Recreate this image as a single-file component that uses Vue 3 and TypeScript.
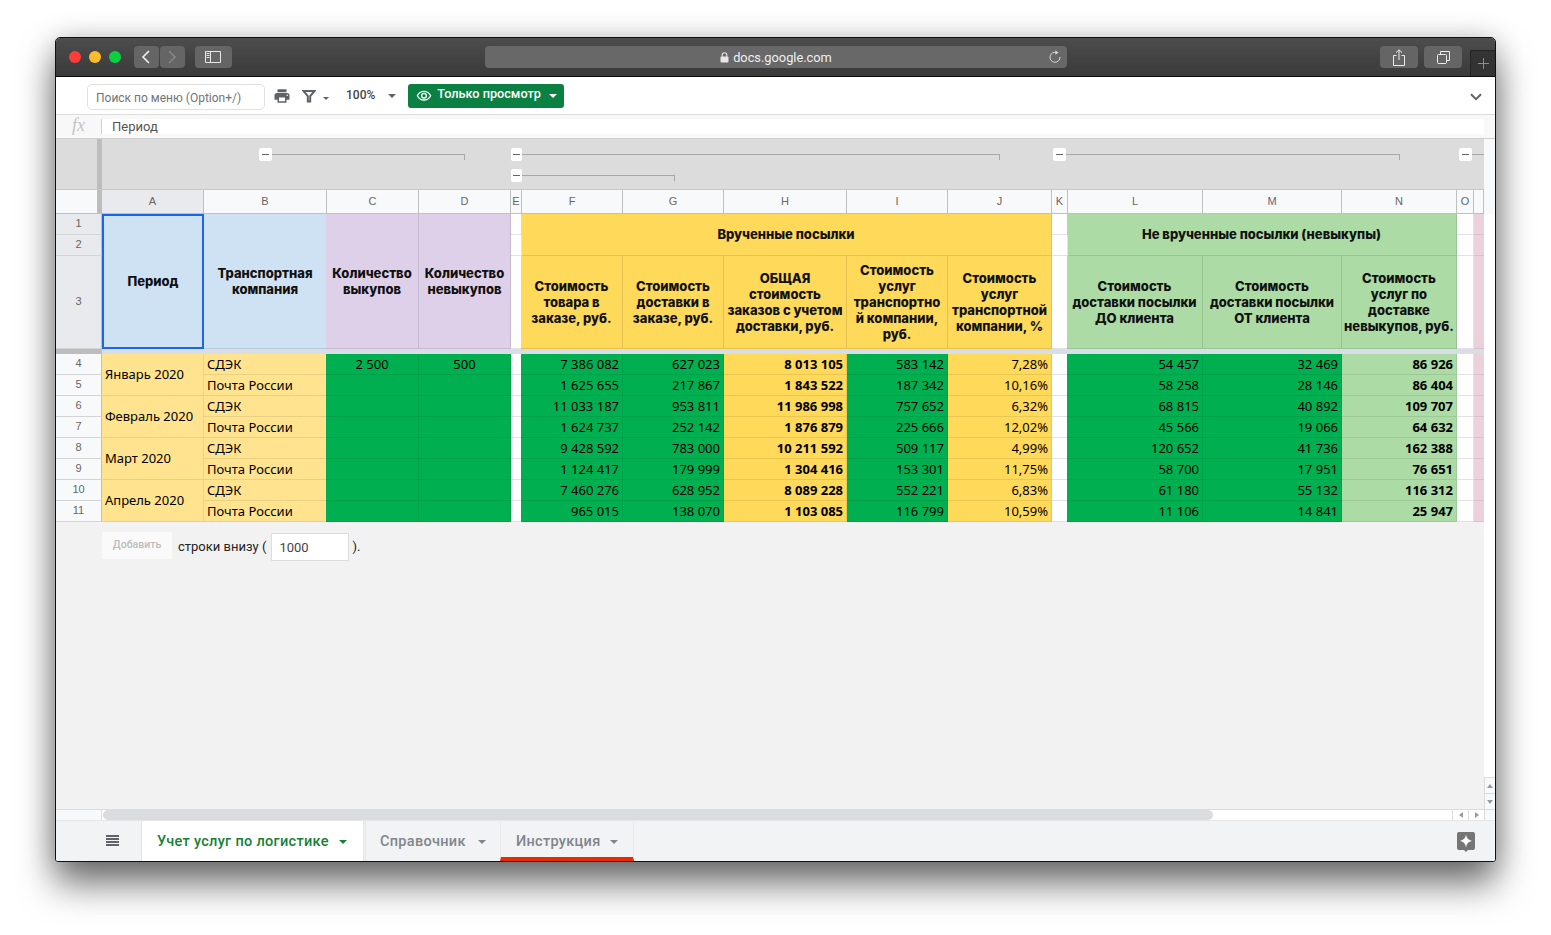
<script setup lang="ts">
interface Row { n: number; period?: string; co: string; c?: string; d?: string; v: string[] }
const cdek = 'СДЭК'
const post = 'Почта России'
const rows: Row[] = [
  { n: 4, period: 'Январь 2020', co: cdek, c: '2 500', d: '500', v: ['7 386 082','627 023','8 013 105','583 142','7,28%','54 457','32 469','86 926'] },
  { n: 5, co: post, v: ['1 625 655','217 867','1 843 522','187 342','10,16%','58 258','28 146','86 404'] },
  { n: 6, period: 'Февраль 2020', co: cdek, v: ['11 033 187','953 811','11 986 998','757 652','6,32%','68 815','40 892','109 707'] },
  { n: 7, co: post, v: ['1 624 737','252 142','1 876 879','225 666','12,02%','45 566','19 066','64 632'] },
  { n: 8, period: 'Март 2020', co: cdek, v: ['9 428 592','783 000','10 211 592','509 117','4,99%','120 652','41 736','162 388'] },
  { n: 9, co: post, v: ['1 124 417','179 999','1 304 416','153 301','11,75%','58 700','17 951','76 651'] },
  { n: 10, period: 'Апрель 2020', co: cdek, v: ['7 460 276','628 952','8 089 228','552 221','6,83%','61 180','55 132','116 312'] },
  { n: 11, co: post, v: ['965 015','138 070','1 103 085','116 799','10,59%','11 106','14 841','25 947'] },
]
const columns = ['A','B','C','D','E','F','G','H','I','J','K','L','M','N','O','']
const groupRows = [
  [{ m: 203, w: 206, tick: true, tight: false }, { m: 46, w: 489, tick: true, tight: true }, { m: 53, w: 347, tick: true, tight: false }, { m: 59, w: 25, tick: false, tight: false }],
  [{ m: 455, w: 164, tick: true, tight: true }],
]
const valueClass = ['green','green','yellow b','green','yellow','green','green','lgreen b']
const deliveredHeads = ['Стоимость\nтовара в\nзаказе, руб.','Стоимость\nдоставки в\nзаказе, руб.','ОБЩАЯ\nстоимость\nзаказов с учетом\nдоставки, руб.','Стоимость\nуслуг\nтранспортно\nй компании,\nруб.','Стоимость\nуслуг\nтранспортной\nкомпании, %']
const returnedHeads = ['Стоимость\nдоставки посылки\nДО клиента','Стоимость\nдоставки посылки\nОТ клиента','Стоимость\nуслуг по\nдоставке\nневыкупов, руб.']
</script>

<template>
  <div class="page">
    <div class="window">
      <header class="titlebar">
        <div class="lights"><i class="red"></i><i class="amber"></i><i class="lime"></i></div>
        <div class="navpair">
          <button class="tbtn nav"><svg width="12" height="16" viewBox="0 0 12 16"><path d="M9 2 3 8l6 6" fill="none" stroke="#f2f2f2" stroke-width="1.6"/></svg></button>
          <button class="tbtn nav"><svg width="12" height="16" viewBox="0 0 12 16"><path d="m3 2 6 6-6 6" fill="none" stroke="#8a8a8a" stroke-width="1.4"/></svg></button>
        </div>
        <button class="tbtn side"><svg width="16" height="12" viewBox="0 0 16 12"><path d="M.5.5h15v11H.5zM5.5.5v11" fill="none" stroke="#e8e8e8"/><path d="M1.5 2.5h3M1.5 4.5h3M1.5 6.5h3" stroke="#e8e8e8"/></svg></button>
        <div class="url">
          <svg width="9" height="11" viewBox="0 0 9 11"><rect x="0.5" y="4.5" width="8" height="6" rx="1" fill="#e6e6e6"/><path d="M2.2 5V3a2.3 2.3 0 0 1 4.6 0v2" fill="none" stroke="#e6e6e6" stroke-width="1.1"/></svg>
          <span>docs.google.com</span>
          <svg class="reload" width="14" height="14" viewBox="0 0 14 14"><path d="M8.8 2.6A5 5 0 1 0 12 7" fill="none" stroke="#d8d8d8" stroke-width="1"/><path d="M7.3.4v4.4l3.4-2.2z" fill="#d8d8d8"/></svg>
        </div>
        <button class="tbtn act share"><svg width="12" height="17" viewBox="0 0 12 17"><path d="M3.5 6.5h-3v10h11v-10h-3" fill="none" stroke="#ececec"/><path d="M6 11V1M3 3.6 6 .8l3 2.8" fill="none" stroke="#ececec"/></svg></button>
        <button class="tbtn act tabs"><svg width="13" height="13" viewBox="0 0 13 13"><path d="M3.5 3V.5h9v9H10" fill="none" stroke="#ececec"/><rect x=".5" y="3.5" width="9" height="9" rx="1" fill="none" stroke="#ececec"/></svg></button>
        <div class="plus"><svg width="13" height="13" viewBox="0 0 13 13"><path d="M6.5 1v11M1 6.5h11" stroke="#8e8e8e"/></svg></div>
      </header>

      <div class="toolbar">
        <div class="search">Поиск по меню (Option+/)</div>
        <svg class="print" width="18" height="18" viewBox="0 0 24 24"><path fill="#5f6368" d="M19 8H5c-1.66 0-3 1.34-3 3v6h4v4h12v-4h4v-6c0-1.66-1.34-3-3-3zm-3 11H8v-5h8v5zm3-7c-.55 0-1-.45-1-1s.45-1 1-1 1 .45 1 1-.45 1-1 1zm-1-9H6v4h12V3z"/></svg>
        <svg class="funnel" width="14" height="13" viewBox="0 0 14 13"><path d="M1.5 1h11L8.2 6v5.5H5.8V6z" fill="none" stroke="#5f6368" stroke-width="2"/></svg>
        <i class="caret small"></i>
        <span class="zoomv">100%</span>
        <i class="caret"></i>
        <button class="viewonly">
          <svg width="16" height="16" viewBox="0 0 24 24"><path fill="#fff" d="M12 6a9.77 9.77 0 0 1 8.82 5.5C19.17 14.87 15.79 17 12 17s-7.17-2.13-8.82-5.5A9.77 9.77 0 0 1 12 6m0-2C7 4 2.73 7.11 1 11.5 2.73 15.89 7 19 12 19s9.27-3.11 11-7.5C21.27 7.11 17 4 12 4zm0 5a2.5 2.5 0 1 1 0 5 2.5 2.5 0 0 1 0-5m0-2a4.5 4.5 0 1 0 0 9 4.5 4.5 0 0 0 0-9z"/></svg>
          <span>Только просмотр</span>
          <i class="caret white"></i>
        </button>
        <svg class="collapse" width="12" height="8" viewBox="0 0 12 8"><path d="m1 1.2 5 5 5-5" fill="none" stroke="#5f6368" stroke-width="2"/></svg>
      </div>

      <div class="formula">
        <span class="fx">fx</span>
        <span class="sep"></span>
        <div class="finput">Период</div>
      </div>

      <div class="main">
        <div class="sheet">
          <div class="groups">
            <div v-for="(gr, i) in groupRows" :key="i" class="grow">
              <div v-for="(g, j) in gr" :key="j" class="grp" :class="{ tick: g.tick, tight: g.tight }" :style="{ marginLeft: g.m + 'px', width: g.w + 'px' }">
                <span class="minus"><b></b></span>
                <span class="gline"></span>
              </div>
            </div>
          </div>

          <div class="grid colhead">
            <div class="corner"></div>
            <div v-for="(c, i) in columns" :key="i" class="ch" :class="{ sel: c === 'A' }">{{ c }}</div>
          </div>

          <div class="grid headgrid">
            <div class="rh sel">1</div>
            <div class="th blue r3 active">Период</div>
            <div class="th blue r3">Транспортная<br>компания</div>
            <div class="th purple r3 lead">Количество<br>выкупов</div>
            <div class="th purple r3">Количество<br>невыкупов</div>
            <div class="blank"></div>
            <div class="th gold c5 r2 lead">Врученные посылки</div>
            <div class="blank"></div>
            <div class="th lgreen c3 r2 lead">Не врученные посылки (невыкупы)</div>
            <div class="blank"></div>
            <div class="pink"></div>
            <div class="rh sel">2</div>
            <div class="blank"></div>
            <div class="blank"></div>
            <div class="blank"></div>
            <div class="pink"></div>
            <div class="rh sel">3</div>
            <div class="blank"></div>
            <div v-for="(h, i) in deliveredHeads" :key="'d' + i" class="th gold pre" :class="{ lead: i === 0 }">{{ h }}</div>
            <div class="blank"></div>
            <div v-for="(h, i) in returnedHeads" :key="'r' + i" class="th lgreen pre" :class="{ lead: i === 0 }">{{ h }}</div>
            <div class="blank"></div>
            <div class="pink"></div>
          </div>

          <div class="freeze"><span></span></div>

          <div class="grid bodygrid">
            <template v-for="r in rows" :key="r.n">
              <div class="rh">{{ r.n }}</div>
              <div v-if="r.period" class="td pale r2 left mid">{{ r.period }}</div>
              <div class="td pale left">{{ r.co }}</div>
              <div class="td green center lead">{{ r.c }}</div>
              <div class="td green center">{{ r.d }}</div>
              <div class="blank"></div>
              <div v-for="(v, i) in r.v.slice(0, 5)" :key="i" class="td" :class="[valueClass[i], { lead: i === 0 }]">{{ v }}</div>
              <div class="blank"></div>
              <div v-for="(v, i) in r.v.slice(5)" :key="i" class="td" :class="[valueClass[i + 5], { lead: i === 0 }]">{{ v }}</div>
              <div class="blank"></div>
              <div class="pink"></div>
            </template>
          </div>

          <div class="addrow">
            <button class="addbtn">Добавить</button>
            <span>строки внизу (</span>
            <div class="count">1000</div>
            <span>).</span>
          </div>
        </div>

        <div class="vbar">
          <div class="vtop"></div>
          <div class="vfill"></div>
          <div class="varrow"><i class="up"></i></div>
          <div class="varrow"><i class="down"></i></div>
        </div>
      </div>

      <div class="hbar">
        <div class="hstart"></div>
        <div class="htrack"><div class="hthumb"></div></div>
        <div class="harrow"><i class="lt"></i></div>
        <div class="harrow"><i class="rt"></i></div>
        <div class="hcorner"></div>
      </div>

      <footer class="tabsbar">
        <div class="burger"><i></i><i></i><i></i><i></i></div>
        <div class="tab active-tab"><span>Учет услуг по логистике</span><i class="caret green-c"></i></div>
        <div class="tab second"><span>Справочник</span><i class="caret gray-c"></i></div>
        <div class="tab third"><span>Инструкция</span><i class="caret gray-c"></i></div>
        <svg class="explore" width="18" height="20" viewBox="0 0 18 20"><path fill="#757575" d="M2 0h14a2 2 0 0 1 2 2v14a2 2 0 0 1-2 2h-5l-2 2-2-2H2a2 2 0 0 1-2-2V2a2 2 0 0 1 2-2z"/><path fill="#fff" d="M9 2.6c.5 3.6 2.3 5.7 6 6.4-3.7.7-5.5 2.8-6 6.4-.5-3.6-2.3-5.7-6-6.4 3.7-.7 5.5-2.8 6-6.4z"/></svg>
      </footer>
    </div>
  </div>
</template>

<style>
html, body { margin: 0; background: #fff; }
</style>

<style scoped>
.page { width: 1551px; height: 935px; padding: 37px 55px 0; box-sizing: border-box; overflow: hidden; background: #fff; font-family: Roboto, sans-serif; }
.window { width: 1441px; height: 825px; box-sizing: border-box; border: 1px solid #111; border-radius: 5px 5px 3px 3px; display: flex; flex-direction: column; overflow: hidden; box-shadow: 0 22px 36px rgba(0,0,0,.55), 0 0 28px rgba(0,0,0,.18); background: #f2f2f2; }

.titlebar { flex: 0 0 38px; box-sizing: border-box; border-bottom: 1px solid #0c0c0c; background: linear-gradient(#4d4d4d, #3a3a3a); display: flex; align-items: flex-start; padding-top: 8px; }
.lights { display: flex; gap: 8px; margin-left: 13px; margin-top: 5px; width: 65px; }
.lights i { width: 12px; height: 12px; border-radius: 50%; }
.red { background: #fc3d39; }
.amber { background: #fdbc2c; }
.lime { background: #09d13f; }
.navpair { display: flex; gap: 1px; }
.tbtn { border: 0; padding: 0; height: 22px; border-radius: 4px; background: #656565; display: flex; align-items: center; justify-content: center; }
.nav { width: 25px; }
.side { width: 37px; margin-left: 10px; }
.url { width: 584px; height: 22px; margin-left: 253px; border-radius: 4px; background: #686868; color: #efefef; font: 12.8px Roboto, sans-serif; display: flex; align-items: center; justify-content: center; gap: 4px; position: relative; }
.reload { position: absolute; right: 5px; top: 4px; }
.act { width: 38px; }
.share { margin-left: 313px; }
.tabs { margin-left: 6px; }
.plus { width: 24px; height: 25px; margin-left: 8px; margin-top: 4px; background: #333; border-left: 1px solid #242424; border-top: 1px solid #242424; display: flex; align-items: center; justify-content: center; }

.toolbar { flex: 0 0 38px; box-sizing: border-box; background: #fff; border-bottom: 1px solid #dcdcdc; display: flex; align-items: flex-start; position: relative; }
.search { width: 178px; height: 26px; box-sizing: border-box; margin: 7px 0 0 31px; border: 1px solid #e0e0e0; border-radius: 5px; padding-left: 8px; font-size: 12px; line-height: 27px; color: #70757a; }
.print { margin: 10px 0 0 8px; }
.funnel { margin: 13px 0 0 11px; }
.caret { display: block; width: 0; height: 0; border-left: 4px solid transparent; border-right: 4px solid transparent; border-top: 4px solid #5f6368; }
.caret.small { border-width: 3px 3px 0; margin: 20px 0 0 7px; }
.zoomv { font-size: 12px; font-weight: 500; color: #444; margin: 11px 0 0 17px; }
.toolbar > .caret:not(.small) { margin: 17px 0 0 13px; }
.viewonly { width: 156px; height: 24px; margin: 7px 0 0 12px; box-sizing: border-box; border: 0; border-radius: 3px; background: #0b8043; color: #fff; font: 500 12.7px Roboto, sans-serif; display: flex; align-items: center; padding: 0 0 5px 8px; }
.viewonly svg { margin-right: 5px; margin-top: 4px; }
.viewonly .caret { margin: 5px 0 0 8px; }
.caret.white { border-top-color: #fff; }
.collapse { position: absolute; right: 13px; top: 16px; }

.formula { flex: 0 0 24px; box-sizing: border-box; background: #f8f8f8; border-bottom: 1px solid #cfcfcf; display: flex; align-items: center; }
.fx { width: 45px; text-align: center; font: italic 18px "Liberation Serif", serif; color: #c4c4c4; margin-top: -3px; }
.sep { width: 1px; height: 15px; background: #d0d0d0; }
.finput { flex: 1; height: 15px; margin: 0 11px 0 0; padding-left: 10px; background: #fff; color: #555; font-size: 13px; line-height: 15px; }

.main { flex: 1 1 0; display: flex; min-height: 0; }
.sheet { flex: 1; display: flex; flex-direction: column; min-width: 0; }
.groups { flex: 0 0 50px; box-sizing: border-box; padding-top: 9px; display: flex; flex-direction: column; gap: 8px; background: linear-gradient(90deg, transparent 41px, #bdbdbd 41px, #bdbdbd 46px, transparent 46px), #dcdcdc; }
.grow { display: flex; height: 13px; }
.grp { display: flex; }
.minus { width: 13px; height: 13px; flex: none; background: #fff; border-radius: 2px; display: flex; align-items: center; justify-content: center; }
.tight .minus { width: 11px; }
.minus b { width: 7px; height: 1px; background: #666; }
.gline { flex: 1; height: 6px; border-top: 1px solid #a8a8a8; margin-top: 6px; box-sizing: border-box; }
.tick .gline { border-right: 1px solid #a8a8a8; }

.grid { display: grid; flex: none; grid-template-columns: 46px 102px 123px 92px 92px 11px 101px 101px 123px 101px 104px 16px 135px 139px 115px 17px 10px; }
.colhead { height: 25px; box-sizing: border-box; border-top: 1px solid #c8c8c8; background: #f8f9fa; }
.corner { background: linear-gradient(90deg, transparent 41px, #bdbdbd 41px, #bdbdbd 46px); border-bottom: 1px solid #c0c0c0; }
.ch { box-sizing: border-box; border-right: 1px solid #c0c0c0; border-bottom: 1px solid #c0c0c0; text-align: center; font: 11px/23px "Liberation Sans", sans-serif; color: #666; }
.ch.sel { background: #e8eaed; }

.headgrid { grid-template-rows: 21px 21px 93px; }
.bodygrid { grid-auto-rows: 21px; }
.rh { box-sizing: border-box; background: #f8f9fa; border-right: 1px solid #c0c0c0; border-bottom: 1px solid #d4d4d4; display: flex; align-items: center; justify-content: center; font: 11px "Liberation Sans", sans-serif; color: #666; padding-bottom: 3px; }
.rh.sel { background: #e8eaed; }
.blank { background: #fff; box-sizing: border-box; border-bottom: 1px solid #e2e2e2; border-right: 1px solid #e2e2e2; }
.pink { background: #ead1dc; border-bottom: 1px solid #d9bfcb; box-sizing: border-box; }

.th { box-sizing: border-box; display: flex; align-items: center; justify-content: center; text-align: center; font: 800 13px/16px Inter, Roboto, sans-serif; color: #111; border-right: 1px solid rgba(0,0,0,.1); border-bottom: 1px solid rgba(0,0,0,.1); }
.pre { white-space: pre-line; }
.r3 { grid-row: span 3; }
.r2 { grid-row: span 2; }
.th.r2 { padding-bottom: 2px; }
.c5 { grid-column: span 5; }
.c3 { grid-column: span 3; }
.blue { background: #cfe2f3; }
.purple { background: #ddd0e8; }
.gold { background: #ffd959; }
.th.lgreen { background: #acdba6; }
.th.active { border: 2px solid #1a66e8; padding-bottom: 2px; }
.lead { margin-left: -1px; }

.freeze { flex: 0 0 5px; background: #d9dde6; display: flex; }
.freeze span { width: 46px; background: #bdbdbd; }

.td { box-sizing: border-box; padding: 0 3px; font: 13px/21px "Noto Sans", "Open Sans", sans-serif; color: #000; text-align: right; white-space: nowrap; border-right: 1px solid rgba(0,0,0,.07); border-bottom: 1px solid rgba(0,0,0,.08); }
.td.b { font-weight: 700; color: #000; }
.pale { background: #ffe38f; text-align: left; }
.mid { display: flex; align-items: center; }
.td.green { background: #00b050; }
.td.yellow { background: #ffd959; }
.td.lgreen { background: #acdba6; }
.center { text-align: center; }

.addrow { flex: 1; display: flex; align-items: flex-start; padding-left: 46px; font-size: 13px; color: #222; }
.addbtn { width: 70px; height: 27px; margin-top: 10px; border: 0; background: #fafafa; color: #bcbcbc; font: 500 10.5px Roboto, sans-serif; padding: 0 0 2px; }
.addrow span { margin-top: 17px; }
.addrow span:nth-of-type(1) { margin-left: 6px; }
.count { width: 78px; height: 28px; margin: 11px 3px 0 5px; box-sizing: border-box; background: #fff; border: 1px solid #ddd; padding-left: 7px; line-height: 28px; color: #444; }

.vbar { width: 11px; display: flex; flex-direction: column; background: #fff; }
.vtop { height: 75px; background: #f8f9fa; }
.vfill { flex: 1; }
.varrow { height: 16px; box-sizing: border-box; border-top: 1px solid #dcdcdc; border-left: 1px solid #dcdcdc; background: #f8f9fa; display: flex; align-items: center; justify-content: center; }
.up { border-left: 3px solid transparent; border-right: 3px solid transparent; border-bottom: 4px solid #999; }
.down { border-left: 3px solid transparent; border-right: 3px solid transparent; border-top: 4px solid #999; }

.hbar { flex: 0 0 12px; box-sizing: border-box; display: flex; background: #fff; border-top: 1px solid #dcdcdc; border-bottom: 1px solid #e6e6e6; }
.hstart { width: 46px; background: #f8f9fa; border-right: 1px solid #e0e0e0; box-sizing: border-box; }
.htrack { flex: 1; padding-left: 1px; }
.hthumb { width: 1110px; height: 10px; border-radius: 5px; background: #dadce0; }
.harrow { width: 16px; box-sizing: border-box; border-left: 1px solid #dcdcdc; display: flex; align-items: center; justify-content: center; }
.lt { border-top: 3px solid transparent; border-bottom: 3px solid transparent; border-right: 4px solid #999; }
.rt { border-top: 3px solid transparent; border-bottom: 3px solid transparent; border-left: 4px solid #999; }
.hcorner { width: 11px; box-sizing: border-box; border-left: 1px solid #dcdcdc; background: #f8f9fa; }

.tabsbar { flex: 0 0 40px; background: #f1f3f4; display: flex; position: relative; font-size: 14.5px; letter-spacing: .3px; font-weight: 500; }
.burger { width: 13px; margin: 14px 23px 0 50px; display: flex; flex-direction: column; gap: 1px; }
.burger i { height: 2px; background: #5f6368; }
.tab { display: flex; align-items: flex-start; box-sizing: border-box; padding-top: 12px; height: 40px; }
.active-tab { width: 222px; margin-left: -1px; background: #fff; color: #188038; padding-left: 15px; border-left: 1px solid #e3e5e8; box-shadow: 1px 0 0 #e3e5e8; }
.second { width: 135px; color: #80868b; padding-left: 14px; margin-left: 2px; border-left: 1px solid #e3e5e8; }
.third { width: 134px; color: #80868b; padding-left: 15px; border-left: 1px solid #e8eaed; border-right: 1px solid #e8eaed; border-bottom: 4px solid #e52d00; }
.tab .caret { margin: 7px 0 0 10px; }
.second.tab .caret { margin-left: 12px; }
.third.tab .caret { margin-left: 9px; }
.green-c { border-top-color: #188038; }
.gray-c { border-top-color: #80868b; }
.explore { position: absolute; right: 20px; top: 11px; }
</style>
